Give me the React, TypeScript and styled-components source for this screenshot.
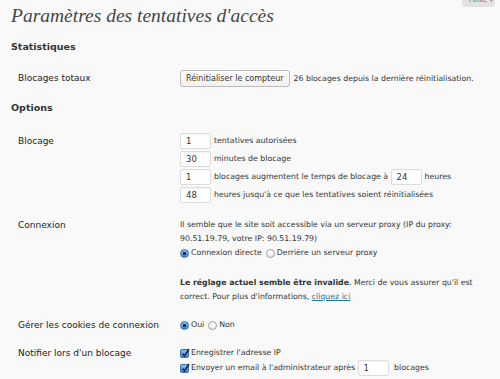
import styled, { createGlobalStyle } from 'styled-components'

const GlobalStyle = createGlobalStyle`
  html, body {
    margin: 0;
    padding: 0;
    background: #f9f9f9;
  }
  body {
    font-family: "DejaVu Sans", "Liberation Sans", sans-serif;
    color: #333;
  }
`

const Page = styled.div`
  width: 500px;
  height: 379px;
  box-sizing: border-box;
  padding-left: 11px;
  overflow: hidden;
  background: #f9f9f9;
`

const Header = styled.div`
  display: flex;
  justify-content: space-between;
  align-items: flex-start;
`

const Title = styled.h2`
  margin: 0;
  padding-top: 4px;
  font-family: "Liberation Serif", "DejaVu Serif", serif;
  font-style: italic;
  font-weight: normal;
  font-size: 19.5px;
  line-height: 24px;
  color: #464646;
`

const HelpTab = styled.div`
  width: 33px;
  height: 7px;
  margin-right: 5px;
  overflow: hidden;
  background: #e3e3e3;
  border-radius: 0 0 3px 3px;
  box-sizing: border-box;
  padding-left: 7px;
  font-size: 8px;
  color: #777;

  span {
    display: block;
    margin-top: -5px;
    line-height: 10px;
  }
`

const SectionTitle = styled.h3<{ $top: number }>`
  margin: ${(p) => p.$top}px 0 0;
  font-size: 9.5px;
  font-weight: bold;
  line-height: 14px;
  color: #333;
`

const FormTable = styled.div<{ $top: number }>`
  margin-top: ${(p) => p.$top}px;
`

const Row = styled.div`
  display: grid;
  grid-template-columns: 169px 300px;
  padding: 7px 0;
`

const Label = styled.div<{ $line: number }>`
  padding-left: 7px;
  font-size: 9px;
  line-height: ${(p) => p.$line}px;
  color: #222;
`

const Field = styled.div`
  font-size: 7.8px;
  line-height: 14px;
  color: #333;
`

const Line = styled.div<{ $h?: number }>`
  display: flex;
  align-items: center;
  height: ${(p) => p.$h ?? 14}px;
  white-space: nowrap;
`

const Para = styled.p<{ $top?: number }>`
  margin: ${(p) => p.$top ?? 0}px 0 0;

  b {
    color: #333;
  }
`

const Button = styled.button`
  height: 17px;
  padding: 0 5px;
  margin-right: 4px;
  border: 1px solid #bbb;
  border-radius: 3px;
  background: linear-gradient(#ffffff, #f1f1f1);
  font-family: "DejaVu Sans", sans-serif;
  font-size: 8px;
  color: #333;
`

const NumberInput = styled.input`
  width: 31px;
  height: 16px;
  box-sizing: border-box;
  margin: 0 3px 0 0;
  padding: 0 5px;
  border: 1px solid #dcdcdc;
  border-radius: 2px;
  background: #fff;
  box-shadow: inset 0 1px 1px rgba(0, 0, 0, 0.04);
  font-family: "DejaVu Sans", sans-serif;
  font-size: 8.5px;
  color: #333;
  outline: none;
`

const Radio = styled.span<{ $checked?: boolean }>`
  display: inline-block;
  width: 9px;
  height: 9px;
  box-sizing: border-box;
  margin: 0 2px 0 0;
  border-radius: 50%;
  flex-shrink: 0;
  border: 1px solid ${(p) => (p.$checked ? '#3a6ea8' : '#9c9c9c')};
  background: ${(p) =>
    p.$checked
      ? 'radial-gradient(circle, #16324f 0 1.4px, transparent 1.9px), linear-gradient(#8cc2f2, #3a86d8)'
      : 'linear-gradient(#ffffff, #ececec)'};
`

const RadioText = styled.span`
  margin-right: 4px;
`

const Check = styled.span`
  display: inline-flex;
  width: 9px;
  height: 9px;
  box-sizing: border-box;
  margin-right: 2px;
  border: 1px solid #3a6ea8;
  border-radius: 2px;
  background: linear-gradient(#8cc2f2, #3a86d8);
  flex-shrink: 0;
  overflow: visible;
  position: relative;

  svg {
    position: absolute;
    left: 0;
    top: -2px;
  }
`

const Link = styled.a`
  color: #21759b;
  text-decoration: underline;
`

function CheckMark() {
  return (
    <Check>
      <svg width="9" height="10" viewBox="0 0 9 10">
        <path d="M1.5 5.5 L3.5 8 L8 1" fill="none" stroke="#1b2b45" strokeWidth="1.6" />
      </svg>
    </Check>
  )
}

function App() {
  return (
    <>
      <GlobalStyle />
      <Page>
        <Header>
          <Title>Paramètres des tentatives d'accès</Title>
          <HelpTab>
            <span>Aide ▾</span>
          </HelpTab>
        </Header>

        <SectionTitle $top={12}>Statistiques</SectionTitle>
        <FormTable $top={9}>
          <Row>
            <Label $line={17}>Blocages totaux</Label>
            <Field>
              <Line $h={17}>
                <Button>Réinitialiser le compteur</Button>
                26 blocages depuis la dernière réinitialisation.
              </Line>
            </Field>
          </Row>
        </FormTable>

        <SectionTitle $top={7}>Options</SectionTitle>
        <FormTable $top={10}>
          <Row>
            <Label $line={18}>Blocage</Label>
            <Field>
              <Line $h={18}>
                <NumberInput defaultValue="1" />
                tentatives autorisées
              </Line>
              <Line $h={18}>
                <NumberInput defaultValue="30" />
                minutes de blocage
              </Line>
              <Line $h={18}>
                <NumberInput defaultValue="1" />
                blocages augmentent le temps de blocage à&nbsp;
                <NumberInput defaultValue="24" />
                heures
              </Line>
              <Line $h={18}>
                <NumberInput defaultValue="48" />
                heures jusqu'à ce que les tentatives soient réinitialisées
              </Line>
            </Field>
          </Row>

          <Row>
            <Label $line={14}>Connexion</Label>
            <Field>
              <Para>
                Il semble que le site soit accessible via un serveur proxy (IP du proxy: 90.51.19.79, votre IP: 90.51.19.79)
              </Para>
              <Line>
                <Radio $checked />
                <RadioText>Connexion directe</RadioText>
                <Radio />
                <RadioText>Derrière un serveur proxy</RadioText>
              </Line>
              <Para $top={16}>
                <b>Le réglage actuel semble être invalide</b>. Merci de vous assurer qu'il est correct. Pour plus
                d'informations, <Link href="#">cliquez ici</Link>
              </Para>
            </Field>
          </Row>

          <Row>
            <Label $line={14}>Gérer les cookies de connexion</Label>
            <Field>
              <Line>
                <Radio $checked />
                <RadioText>Oui</RadioText>
                <Radio />
                <RadioText>Non</RadioText>
              </Line>
            </Field>
          </Row>

          <Row>
            <Label $line={14}>Notifier lors d'un blocage</Label>
            <Field>
              <Line>
                <CheckMark />
                Enregistrer l'adresse IP
              </Line>
              <Line $h={16}>
                <CheckMark />
                Envoyer un email à l'administrateur après&nbsp;
                <NumberInput defaultValue="1" />
                &nbsp;blocages
              </Line>
            </Field>
          </Row>
        </FormTable>
      </Page>
    </>
  )
}

export default App
